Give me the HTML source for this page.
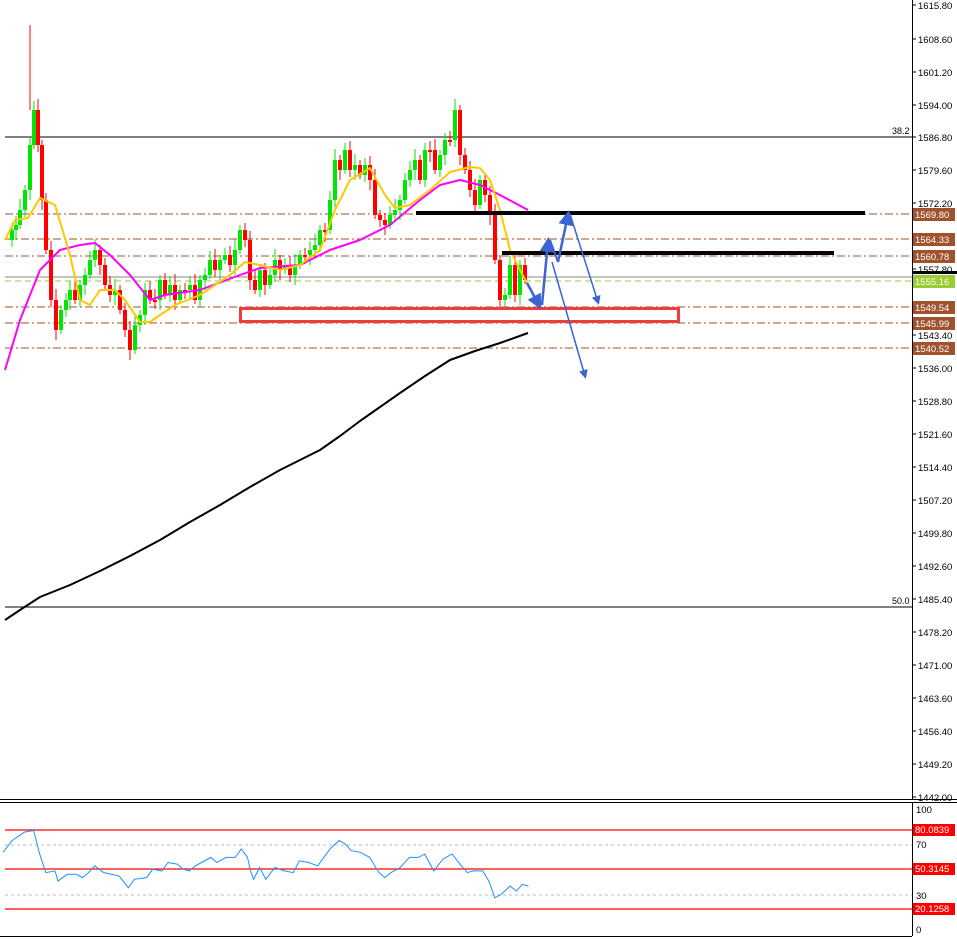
<!DOCTYPE html>
<html><head><meta charset="utf-8"><style>
html,body{margin:0;padding:0;background:#fff;width:957px;height:939px;overflow:hidden}
svg{display:block;font-family:"Liberation Sans",sans-serif}
</style></head><body>
<svg id="s" width="957" height="939" viewBox="0 0 957 939" xmlns="http://www.w3.org/2000/svg">
<rect width="957" height="939" fill="#fff"/>
<line x1="5" y1="137" x2="912" y2="137" stroke="#000" stroke-width="1"/>
<line x1="5" y1="607" x2="912" y2="607" stroke="#000" stroke-width="1"/>
<text x="892" y="134" font-size="9" fill="#000">38.2</text>
<text x="892" y="604" font-size="9" fill="#000">50.0</text>
<line x1="5" y1="277" x2="912" y2="277" stroke="#8a8a8a"/>
<line x1="5" y1="281" x2="912" y2="281" stroke="#9acd32" stroke-dasharray="6,4"/>
<g stroke="#a0522d" stroke-dasharray="8,3,2,3" stroke-width="1">
<line x1="5" y1="214" x2="912" y2="214"/><line x1="5" y1="239" x2="912" y2="239"/>
<line x1="5" y1="256" x2="912" y2="256"/><line x1="5" y1="307" x2="912" y2="307"/>
<line x1="5" y1="323" x2="912" y2="323"/><line x1="5" y1="348" x2="912" y2="348"/>
</g>
<g id="candles"></g>
<polyline fill="none" stroke="#000" stroke-width="2" stroke-linejoin="round" points="5,620 20,610 40,597 70,585 100,571 130,556 160,540 190,522 220,505 250,487 280,470 300,460 320,450 340,436 360,421 380,407 400,393 425,376 450,360 475,351 500,343 528,333"/>
<polyline fill="none" stroke="#ff00ff" stroke-width="2" stroke-linejoin="round" points="5,370 20,320 40,270 60,250 80,245 95,243 110,255 130,275 150,300 165,295 200,290 240,275 260,268 300,265 330,250 360,240 390,225 420,200 440,185 460,180 480,185 500,195 528,210"/>
<polyline fill="none" stroke="#ffc800" stroke-width="2" stroke-linejoin="round" points="5,240 15,220 28,218 40,198 55,205 70,255 80,300 90,305 100,290 115,290 125,300 140,322 150,322 160,315 175,305 200,295 230,275 245,262 260,265 280,270 300,265 320,250 335,210 350,180 370,168 385,195 395,208 410,205 430,190 450,172 470,167 480,168 490,180 500,210 510,250 520,270 528,285"/>
<rect x="416" y="211" width="449" height="4" fill="#000"/>
<rect x="502" y="251" width="332" height="4" fill="#000"/>
<rect x="240.5" y="308.5" width="438" height="13" fill="none" stroke="#f03c3c" stroke-width="3"/>
<defs><marker id="ah" markerWidth="6" markerHeight="6" refX="4" refY="3" orient="auto"><path d="M0,0 L6,3 L0,6 Z" fill="#3c64d2"/></marker></defs>
<g stroke="#3c64d2" fill="none">
<line x1="527" y1="283" x2="539" y2="305" stroke-width="2.5" marker-end="url(#ah)"/>
<line x1="542" y1="305" x2="548" y2="242" stroke-width="2.5" marker-end="url(#ah)"/>
<line x1="550" y1="240" x2="558" y2="262" stroke-width="2"/>
<line x1="558" y1="262" x2="568" y2="215" stroke-width="2.5" marker-end="url(#ah)"/>
<line x1="570" y1="214" x2="598" y2="302" stroke-width="1.5" marker-end="url(#ah)"/>
<line x1="552" y1="262" x2="585" y2="376" stroke-width="1.5" marker-end="url(#ah)"/>
</g>
<line x1="912.5" y1="0" x2="912.5" y2="800" stroke="#000"/>
<g id="axis" font-size="9.5" fill="#000"></g>
<line x1="0" y1="799.5" x2="957" y2="799.5" stroke="#000"/>
<line x1="0" y1="802.5" x2="957" y2="802.5" stroke="#000"/>
<line x1="912.5" y1="803" x2="912.5" y2="936" stroke="#000"/>
<line x1="0" y1="936.5" x2="912" y2="936.5" stroke="#000"/>
<g stroke="#ff0000" stroke-width="1.2"><line x1="5" y1="830" x2="912" y2="830"/><line x1="5" y1="869" x2="912" y2="869"/><line x1="5" y1="909" x2="912" y2="909"/></g>
<g stroke="#bbb" stroke-dasharray="3,3"><line x1="5" y1="845" x2="912" y2="845"/><line x1="5" y1="895" x2="912" y2="895"/></g>
<polyline id="rsi" fill="none" stroke="#1e90ff" stroke-width="1"/>
<g font-size="9.5">
<text x="916" y="813">100</text><text x="916" y="848">70</text><text x="916" y="899">30</text><text x="916" y="933">0</text>
<rect x="913" y="824" width="42" height="12" fill="#f00"/><text x="915" y="833" fill="#fff">80.0839</text>
<rect x="913" y="863" width="42" height="12" fill="#f00"/><text x="915" y="872" fill="#fff">50.3145</text>
<rect x="913" y="903" width="42" height="12" fill="#f00"/><text x="915" y="912" fill="#fff">20.1258</text>
</g>
</svg>
<script>
(function(){
var NS="http://www.w3.org/2000/svg";
function el(p,t,a){var e=document.createElementNS(NS,t);for(var k in a)e.setAttribute(k,a[k]);p.appendChild(e);return e}
var ys=[[7,240],[12,230],[16,225],[20,210],[25,190],[30,145],[34,110],[38,145],[42,200],[46,250],[51,300],[56,330],[61,310],[66,300],[70,290],[75,300],[80,285],[85,275],[90,260],[95,250],[100,265],[105,285],[110,295],[115,290],[120,310],[125,330],[130,350],[135,325],[140,315],[145,290],[150,300],[155,300],[160,280],[165,295],[170,285],[175,300],[180,290],[185,290],[190,285],[195,300],[200,280],[205,275],[210,260],[215,270],[220,260],[225,255],[230,265],[235,250],[240,230],[245,240],[250,280],[255,290],[260,270],[265,285],[270,275],[275,260],[280,270],[285,265],[290,275],[295,265],[300,255],[305,255],[310,250],[315,245],[320,230],[325,230],[330,200],[335,160],[340,170],[345,150],[350,170],[355,165],[360,175],[365,165],[370,180],[375,215],[380,220],[385,225],[390,215],[395,210],[400,200],[405,180],[410,170],[415,160],[420,180],[425,150],[430,150],[435,170],[440,155],[445,140],[450,140],[455,110],[460,155],[465,170],[470,190],[475,205],[480,180],[485,195],[490,215],[495,260],[500,300],[505,295],[510,265],[515,295],[520,265],[525,280]];
var g=document.getElementById("candles");
for(var i=1;i<ys.length;i++){var x=ys[i][0],o=ys[i-1][1],c=ys[i][1];var up=c<o;var col=up?"#00e600":"#ff0000";
var tp=Math.min(o,c),bt=Math.max(o,c);if(bt-tp<2)bt=tp+2;
el(g,"line",{x1:x,x2:x,y1:tp-5-(i%4)*2,y2:bt+4+(i%3)*3,stroke:col,"stroke-width":1});
el(g,"rect",{x:x-2,y:tp,width:4,height:bt-tp,fill:col});}
el(g,"line",{x1:30,x2:30,y1:25,y2:110,stroke:"#ff0000"});
var ax=document.getElementById("axis");
var t=[["1615.80",5],["1608.60",39],["1601.20",72],["1594.00",105],["1586.80",137],["1579.60",170],["1572.20",203],["1557.80",269],["1543.40",335],["1536.00",368],["1528.80",401],["1521.60",434],["1514.40",467],["1507.20",500],["1499.80",533],["1492.60",566],["1485.40",599],["1478.20",632],["1471.00",665],["1463.60",698],["1456.40",731],["1449.20",764],["1442.00",797]];
t.forEach(function(a){el(ax,"line",{x1:912,x2:916,y1:a[1],y2:a[1],stroke:"#000"});var e=el(ax,"text",{x:918,y:a[1]+4});e.textContent=a[0];});
el(ax,"rect",{x:913,y:271,width:44,height:3,fill:"#000"});
var L=[["1569.80",214,"#a0522d"],["1564.33",239,"#a0522d"],["1560.78",256,"#a0522d"],["1555.16",281,"#9acd32"],["1549.54",307,"#a0522d"],["1545.99",323,"#a0522d"],["1540.52",348,"#a0522d"]];
L.forEach(function(a){el(ax,"rect",{x:913,y:a[1]-6,width:42,height:13,fill:a[2]});var e=el(ax,"text",{x:915,y:a[1]+4,fill:"#fff"});e.textContent=a[0];});
var r=[[5,185],[20,150],[40,125],[55,120],[65,190],[75,245],[90,240],[95,270],[110,250],[125,250],[135,260],[145,245],[155,225],[170,245],[195,255],[210,290],[220,265],[240,260],[250,235],[265,240],[275,215],[290,220],[300,235],[310,240],[320,225],[330,215],[345,200],[355,215],[370,200],[385,200],[395,175],[405,200],[410,240],[415,265],[425,230],[435,265],[450,230],[465,240],[480,245],[490,210],[505,215],[520,225],[540,175],[555,150],[565,160],[575,180],[590,185],[605,200],[620,245],[630,260],[640,245],[655,230],[670,200],[685,200],[695,190],[710,240],[725,205],[740,190],[755,225],[765,245],[775,240],[790,240],[800,270],[810,320],[820,310],[835,285],[845,300],[855,280],[865,285]];
document.getElementById("rsi").setAttribute("points",r.map(function(p){return (p[0]*0.611).toFixed(1)+","+(p[1]*0.337+790).toFixed(1)}).join(" "));
})();
</script>
</body></html>
